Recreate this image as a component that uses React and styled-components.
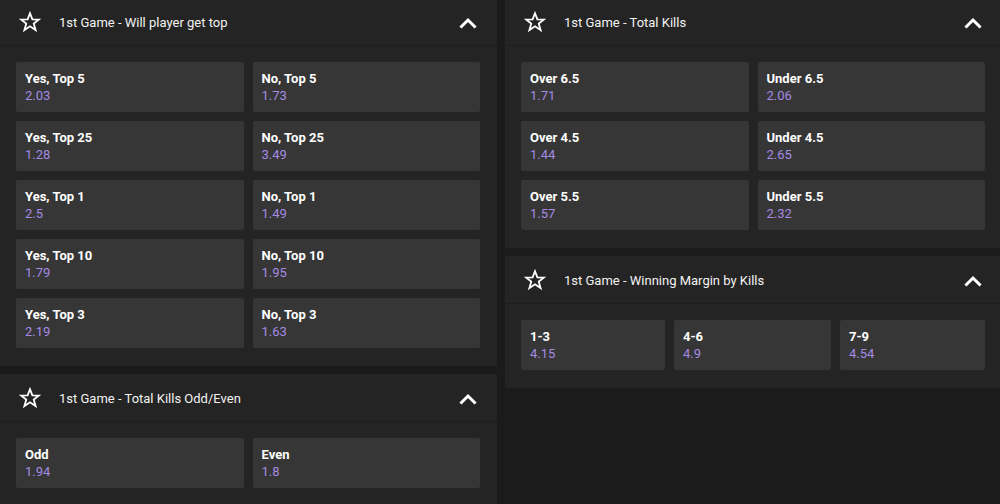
import React from 'react';
import styled, { createGlobalStyle } from 'styled-components';

const leftMarkets = [
  {
    title: '1st Game - Will player get top',
    cols: '1fr 1fr',
    odds: [
      { label: 'Yes, Top 5', price: '2.03' },
      { label: 'No, Top 5', price: '1.73' },
      { label: 'Yes, Top 25', price: '1.28' },
      { label: 'No, Top 25', price: '3.49' },
      { label: 'Yes, Top 1', price: '2.5' },
      { label: 'No, Top 1', price: '1.49' },
      { label: 'Yes, Top 10', price: '1.79' },
      { label: 'No, Top 10', price: '1.95' },
      { label: 'Yes, Top 3', price: '2.19' },
      { label: 'No, Top 3', price: '1.63' },
    ],
  },
  {
    title: '1st Game - Total Kills Odd/Even',
    cols: '1fr 1fr',
    odds: [
      { label: 'Odd', price: '1.94' },
      { label: 'Even', price: '1.8' },
    ],
  },
];

const rightMarkets = [
  {
    title: '1st Game - Total Kills',
    cols: '1fr 1fr',
    odds: [
      { label: 'Over 6.5', price: '1.71' },
      { label: 'Under 6.5', price: '2.06' },
      { label: 'Over 4.5', price: '1.44' },
      { label: 'Under 4.5', price: '2.65' },
      { label: 'Over 5.5', price: '1.57' },
      { label: 'Under 5.5', price: '2.32' },
    ],
  },
  {
    title: '1st Game - Winning Margin by Kills',
    cols: '144fr 157fr 145fr',
    odds: [
      { label: '1-3', price: '4.15' },
      { label: '4-6', price: '4.9' },
      { label: '7-9', price: '4.54' },
    ],
  },
];

const StarIcon = () => (
  <svg width="22" height="22" viewBox="0 0 24 24" fill="none" stroke="#fff" strokeWidth="2" strokeLinejoin="miter">
    <polygon points="12,2.5 14.6,9.2 21.6,9.4 16.1,13.8 18.1,20.8 12,16.7 5.9,20.8 7.9,13.8 2.4,9.4 9.4,9.2" />
  </svg>
);

const ChevronUp = () => (
  <svg width="18" height="12" viewBox="0 0 18 12" fill="none" stroke="#fff" strokeWidth="3" strokeLinecap="square">
    <polyline points="2.5,9.5 9,3 15.5,9.5" />
  </svg>
);

const Market = ({ market }) => (
  <Panel>
    <PanelHeader>
      <StarButton><StarIcon /></StarButton>
      <Title>{market.title}</Title>
      <Toggle><ChevronUp /></Toggle>
    </PanelHeader>
    <OddsGrid cols={market.cols}>
      {market.odds.map((o) => (
        <OddCard key={o.label}>
          <Label>{o.label}</Label>
          <Price>{o.price}</Price>
        </OddCard>
      ))}
    </OddsGrid>
  </Panel>
);

const App = () => (
  <>
    <GlobalStyle />
    <Page>
      <Column>
        {leftMarkets.map((m) => <Market key={m.title} market={m} />)}
      </Column>
      <Column>
        {rightMarkets.map((m) => <Market key={m.title} market={m} />)}
      </Column>
    </Page>
  </>
);

const GlobalStyle = createGlobalStyle`
  html, body {
    margin: 0;
    padding: 0;
    background: #1b1b1b;
    overflow: hidden;
  }
  body {
    font-family: Roboto, "Liberation Sans", sans-serif;
  }
`;

const Page = styled.div`
  display: grid;
  grid-template-columns: 497px 497px;
  column-gap: 8px;
  align-items: start;
  width: 1002px;
  height: 506px;
  margin-top: -2px;
  background: #1b1b1b;
  overflow: hidden;
`;

const Column = styled.div`
  display: flex;
  flex-direction: column;
  gap: 8px;
`;

const Panel = styled.section`
  background: #242424;
`;

const PanelHeader = styled.div`
  display: flex;
  align-items: center;
  height: 47px;
  border-bottom: 1px solid #1e1e1e;
  padding: 0 20px 0 19px;
`;

const StarButton = styled.span`
  display: flex;
  width: 22px;
  margin-right: 18px;
`;

const Title = styled.span`
  flex: 1;
  color: #f2f2f2;
  font-size: 13px;
  font-weight: 400;
  line-height: 18px;
  padding-top: 2px;
`;

const Toggle = styled.span`
  display: flex;
  padding-top: 2px;
`;

const OddsGrid = styled.div`
  display: grid;
  grid-template-columns: ${(props) => props.cols};
  gap: 9px;
  padding: 16px 17px 18px 16px;
`;

const OddCard = styled.div`
  display: flex;
  flex-direction: column;
  justify-content: center;
  height: 50px;
  box-sizing: border-box;
  padding: 0 9px 0;
  background: #363636;
  border-radius: 2px;
`;

const Label = styled.span`
  color: #fff;
  font-weight: 700;
  font-size: 13px;
  line-height: 17px;
`;

const Price = styled.span`
  color: #a58be3;
  font-size: 13px;
  line-height: 17px;
`;

export default App;
